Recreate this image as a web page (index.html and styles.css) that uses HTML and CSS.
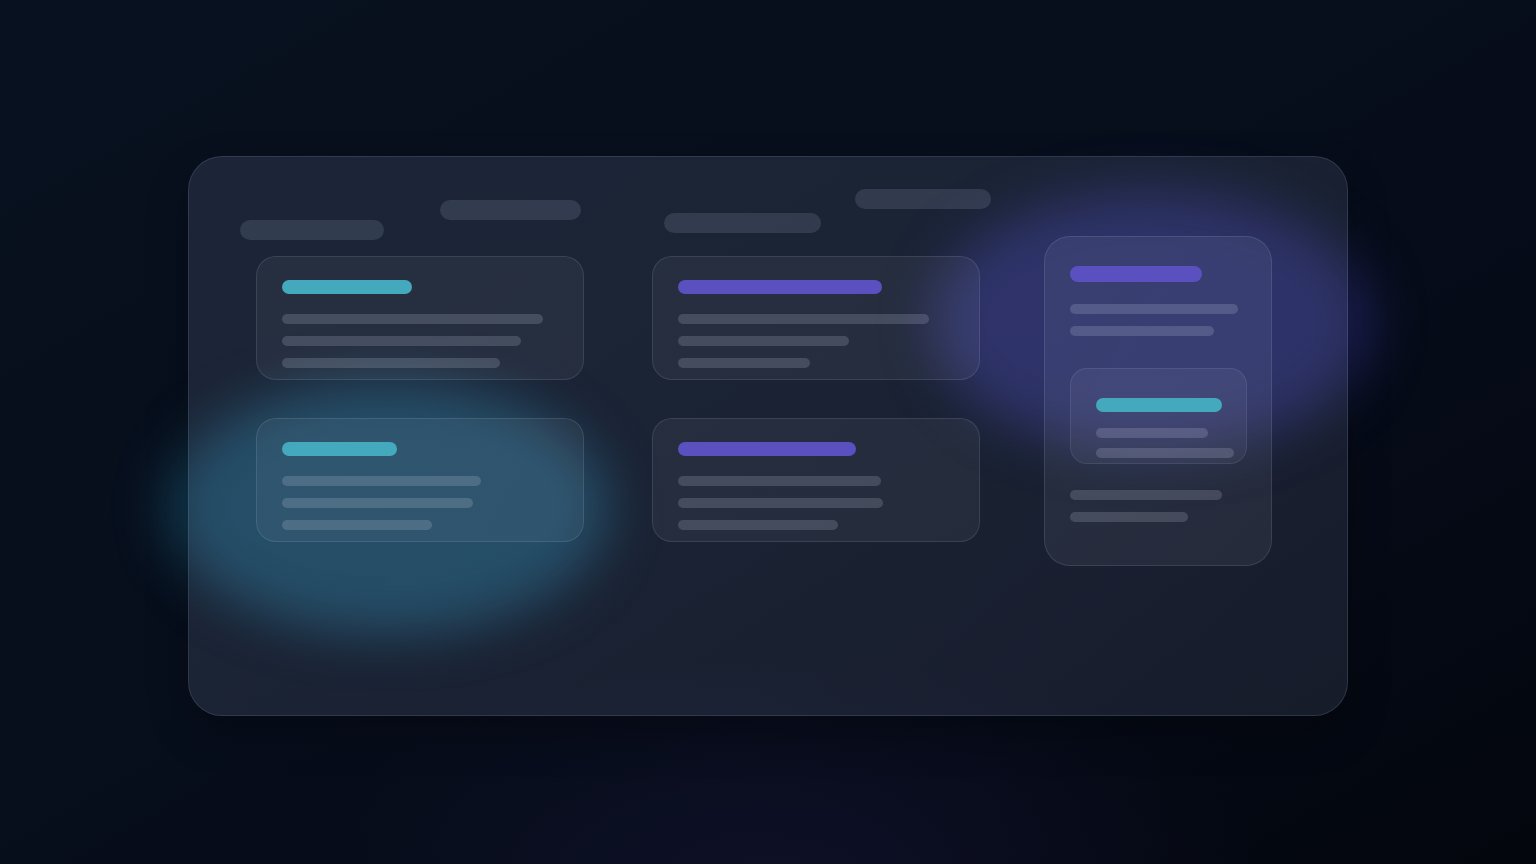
FILE: index.html
```html
<!DOCTYPE html>
<html lang="en">
<head>
<meta charset="utf-8">
<title>Board</title>
<link rel="stylesheet" href="styles.css">
</head>
<body>
<div class="glow glow-cyan"></div>
<div class="glow glow-purple"></div>
<div class="panel">
  <div class="main">
    <div class="header">
      <div class="pill p1"></div>
      <div class="pill p2"></div>
      <div class="pill p3"></div>
      <div class="pill p4"></div>
    </div>
    <div class="grid">
      <div class="card">
        <div class="accent cyan" style="width:130px"></div>
        <div class="line" style="width:261px"></div>
        <div class="line" style="width:239px"></div>
        <div class="line" style="width:218px"></div>
      </div>
      <div class="card">
        <div class="accent purple" style="width:204px"></div>
        <div class="line" style="width:251px"></div>
        <div class="line" style="width:171px"></div>
        <div class="line" style="width:132px"></div>
      </div>
      <div class="card">
        <div class="accent cyan" style="width:115px"></div>
        <div class="line" style="width:199px"></div>
        <div class="line" style="width:191px"></div>
        <div class="line" style="width:150px"></div>
      </div>
      <div class="card">
        <div class="accent purple" style="width:178px"></div>
        <div class="line" style="width:203px"></div>
        <div class="line" style="width:205px"></div>
        <div class="line" style="width:160px"></div>
      </div>
    </div>
  </div>
  <div class="side">
    <div class="accent purple tall" style="width:132px"></div>
    <div class="line" style="width:168px"></div>
    <div class="line gap-lg" style="width:144px"></div>
    <div class="inner">
      <div class="accent cyan inner-accent" style="width:126px"></div>
      <div class="line tight" style="width:112px"></div>
      <div class="line tight" style="width:138px"></div>
    </div>
    <div class="line" style="width:152px"></div>
    <div class="line" style="width:118px"></div>
  </div>
</div>
</body>
</html>
```

FILE: styles.css
```css
html, body {
  margin: 0;
  padding: 0;
}
body {
  width: 1536px;
  height: 864px;
  overflow: hidden;
  position: relative;
  font-family: "Inter", "Liberation Sans", sans-serif;
  background:
    radial-gradient(ellipse 480px 220px at 780px 880px, rgba(28, 26, 66, 0.4), rgba(28, 26, 66, 0) 100%),
    linear-gradient(150deg, #08111f 0%, #070e1c 45%, #050a16 75%, #03060d 100%);
}

.glow {
  position: absolute;
  border-radius: 50%;
  filter: blur(26px);
  z-index: 0;
}
.glow-cyan {
  left: 168px;
  top: 382px;
  width: 440px;
  height: 252px;
  background: rgba(30, 104, 134, 0.55);
}
.glow-purple {
  left: 932px;
  top: 192px;
  width: 440px;
  height: 260px;
  background: rgba(52, 52, 146, 0.52);
}

.panel {
  position: relative;
  z-index: 1;
  box-sizing: border-box;
  width: 1160px;
  height: 560px;
  margin: 156px auto 0;
  padding: 32px 0 0 51px;
  border: 1px solid rgba(200, 215, 240, 0.13);
  border-radius: 34px;
  background: linear-gradient(120deg, rgba(160, 180, 220, 0.135), rgba(160, 178, 220, 0.13) 60%, rgba(160, 172, 215, 0.12));
  box-shadow: 0 18px 40px rgba(0, 0, 0, 0.25);
  display: flex;
  align-items: flex-start;
}

.main {
  width: 740px;
  flex-shrink: 0;
}

.header {
  display: flex;
  align-items: flex-start;
  height: 51px;
}
.pill {
  flex-shrink: 0;
  height: 20px;
  border-radius: 10px;
  background: rgba(210, 220, 245, 0.13);
}
.p1 { width: 144px; margin-top: 31px; }
.p2 { width: 141px; margin-top: 11px; margin-left: 56px; }
.p3 { width: 157px; margin-top: 24px; margin-left: 83px; }
.p4 { width: 136px; margin-top: 0; margin-left: 34px; }

.grid {
  display: grid;
  grid-template-columns: 328px 328px;
  column-gap: 68px;
  row-gap: 38px;
  margin: 16px 0 0 16px;
}

.card {
  box-sizing: border-box;
  height: 124px;
  padding: 23px 25px 0;
  border: 1px solid rgba(210, 222, 245, 0.12);
  border-radius: 20px;
  background: rgba(215, 225, 245, 0.06);
}

.accent {
  height: 14px;
  border-radius: 7px;
  margin-bottom: 20px;
}
.cyan { background: #45a9bd; }
.purple { background: #5a50c0; }

.line {
  height: 10px;
  border-radius: 5px;
  background: rgba(225, 232, 248, 0.17);
  margin-bottom: 12px;
}
.line:last-child { margin-bottom: 0; }

.side {
  flex-shrink: 0;
  box-sizing: border-box;
  width: 228px;
  height: 330px;
  margin: 47px 0 0 64px;
  padding: 29px 25px 0;
  border: 1px solid rgba(210, 222, 245, 0.12);
  border-radius: 26px;
  background: rgba(215, 225, 245, 0.07);
}
.accent.tall {
  height: 16px;
  border-radius: 8px;
  margin-bottom: 22px;
}
.line.gap-lg { margin-bottom: 32px; }

.inner {
  box-sizing: border-box;
  width: 177px;
  height: 96px;
  margin-bottom: 26px;
  padding: 29px 0 0 25px;
  border: 1px solid rgba(210, 222, 245, 0.1);
  border-radius: 17px;
  background: rgba(215, 225, 245, 0.06);
}
.inner-accent { margin-bottom: 16px; }
.line.tight { margin-bottom: 10px; }
.line.tight:last-child { margin-bottom: 0; }
```
